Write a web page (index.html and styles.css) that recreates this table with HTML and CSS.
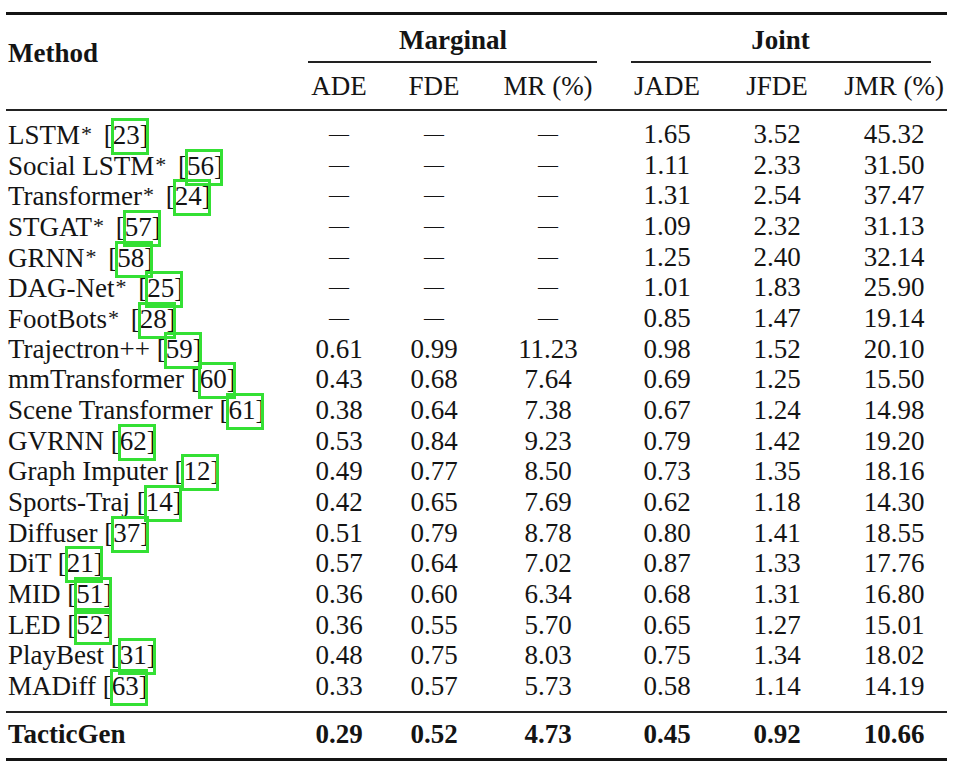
FILE: index.html
```html
<!DOCTYPE html>
<html lang="en">
<head>
<meta charset="utf-8">
<title>Results table</title>
<link rel="stylesheet" href="styles.css">
</head>
<body>
<div class="table">
  <div class="head">
    <div class="method">Method</div>
    <div class="grp marg">Marginal</div>
    <div class="grp joint">Joint</div>
    <div class="sub">ADE</div>
    <div class="sub">FDE</div>
    <div class="sub">MR (%)</div>
    <div class="sub">JADE</div>
    <div class="sub">JFDE</div>
    <div class="sub last">JMR (%)</div>
  </div>
  <div class="body">
    <div class="row"><div class="name">LSTM<span class="ast">*</span> [<span class="cite">23]</span></div><div class="c"><span class="dash">—</span></div><div class="c"><span class="dash">—</span></div><div class="c"><span class="dash">—</span></div><div class="c">1.65</div><div class="c">3.52</div><div class="c last">45.32</div></div>
    <div class="row"><div class="name">Social LSTM<span class="ast">*</span> [<span class="cite">56]</span></div><div class="c"><span class="dash">—</span></div><div class="c"><span class="dash">—</span></div><div class="c"><span class="dash">—</span></div><div class="c">1.11</div><div class="c">2.33</div><div class="c last">31.50</div></div>
    <div class="row"><div class="name">Transformer<span class="ast">*</span> [<span class="cite">24]</span></div><div class="c"><span class="dash">—</span></div><div class="c"><span class="dash">—</span></div><div class="c"><span class="dash">—</span></div><div class="c">1.31</div><div class="c">2.54</div><div class="c last">37.47</div></div>
    <div class="row"><div class="name">STGAT<span class="ast">*</span> [<span class="cite">57]</span></div><div class="c"><span class="dash">—</span></div><div class="c"><span class="dash">—</span></div><div class="c"><span class="dash">—</span></div><div class="c">1.09</div><div class="c">2.32</div><div class="c last">31.13</div></div>
    <div class="row"><div class="name">GRNN<span class="ast">*</span> [<span class="cite">58]</span></div><div class="c"><span class="dash">—</span></div><div class="c"><span class="dash">—</span></div><div class="c"><span class="dash">—</span></div><div class="c">1.25</div><div class="c">2.40</div><div class="c last">32.14</div></div>
    <div class="row"><div class="name">DAG-Net<span class="ast">*</span> [<span class="cite">25]</span></div><div class="c"><span class="dash">—</span></div><div class="c"><span class="dash">—</span></div><div class="c"><span class="dash">—</span></div><div class="c">1.01</div><div class="c">1.83</div><div class="c last">25.90</div></div>
    <div class="row"><div class="name">FootBots<span class="ast">*</span> [<span class="cite">28]</span></div><div class="c"><span class="dash">—</span></div><div class="c"><span class="dash">—</span></div><div class="c"><span class="dash">—</span></div><div class="c">0.85</div><div class="c">1.47</div><div class="c last">19.14</div></div>
    <div class="row"><div class="name">Trajectron++ [<span class="cite">59]</span></div><div class="c">0.61</div><div class="c">0.99</div><div class="c">11.23</div><div class="c">0.98</div><div class="c">1.52</div><div class="c last">20.10</div></div>
    <div class="row"><div class="name">mmTransformer [<span class="cite">60]</span></div><div class="c">0.43</div><div class="c">0.68</div><div class="c">7.64</div><div class="c">0.69</div><div class="c">1.25</div><div class="c last">15.50</div></div>
    <div class="row"><div class="name">Scene Transformer [<span class="cite">61]</span></div><div class="c">0.38</div><div class="c">0.64</div><div class="c">7.38</div><div class="c">0.67</div><div class="c">1.24</div><div class="c last">14.98</div></div>
    <div class="row"><div class="name">GVRNN [<span class="cite">62]</span></div><div class="c">0.53</div><div class="c">0.84</div><div class="c">9.23</div><div class="c">0.79</div><div class="c">1.42</div><div class="c last">19.20</div></div>
    <div class="row"><div class="name">Graph Imputer [<span class="cite">12]</span></div><div class="c">0.49</div><div class="c">0.77</div><div class="c">8.50</div><div class="c">0.73</div><div class="c">1.35</div><div class="c last">18.16</div></div>
    <div class="row"><div class="name">Sports-Traj [<span class="cite">14]</span></div><div class="c">0.42</div><div class="c">0.65</div><div class="c">7.69</div><div class="c">0.62</div><div class="c">1.18</div><div class="c last">14.30</div></div>
    <div class="row"><div class="name">Diffuser [<span class="cite">37]</span></div><div class="c">0.51</div><div class="c">0.79</div><div class="c">8.78</div><div class="c">0.80</div><div class="c">1.41</div><div class="c last">18.55</div></div>
    <div class="row"><div class="name">DiT [<span class="cite">21]</span></div><div class="c">0.57</div><div class="c">0.64</div><div class="c">7.02</div><div class="c">0.87</div><div class="c">1.33</div><div class="c last">17.76</div></div>
    <div class="row"><div class="name">MID [<span class="cite">51]</span></div><div class="c">0.36</div><div class="c">0.60</div><div class="c">6.34</div><div class="c">0.68</div><div class="c">1.31</div><div class="c last">16.80</div></div>
    <div class="row"><div class="name">LED [<span class="cite">52]</span></div><div class="c">0.36</div><div class="c">0.55</div><div class="c">5.70</div><div class="c">0.65</div><div class="c">1.27</div><div class="c last">15.01</div></div>
    <div class="row"><div class="name">PlayBest [<span class="cite">31]</span></div><div class="c">0.48</div><div class="c">0.75</div><div class="c">8.03</div><div class="c">0.75</div><div class="c">1.34</div><div class="c last">18.02</div></div>
    <div class="row"><div class="name">MADiff [<span class="cite">63]</span></div><div class="c">0.33</div><div class="c">0.57</div><div class="c">5.73</div><div class="c">0.58</div><div class="c">1.14</div><div class="c last">14.19</div></div>
  </div>
  <div class="final">
    <div class="row bold"><div class="name">TacticGen</div><div class="c">0.29</div><div class="c">0.52</div><div class="c">4.73</div><div class="c">0.45</div><div class="c">0.92</div><div class="c last">10.66</div></div>
  </div>
</div>
</body>
</html>
```

FILE: styles.css
```css
html, body {
  margin: 0;
  padding: 0;
  background: #ffffff;
}

body {
  font-family: "Liberation Serif", "Times New Roman", serif;
  font-size: 27px;
  color: #141414;
}

.table {
  margin: 12px 0 0 6px;
  width: 941px;
  border-top: 3px solid #141414;
  border-bottom: 3px solid #141414;
}

.head,
.row {
  display: grid;
  grid-template-columns: 286px 94px 96px 132px 106px 114px 113px;
}

.head {
  border-bottom: 2px solid #222;
}

.method {
  grid-column: 1;
  grid-row: 1 / 3;
  font-weight: bold;
  padding: 23px 0 0 2px;
  line-height: 30.67px;
}

.grp {
  font-weight: bold;
  text-align: center;
  padding-top: 9.6px;
  line-height: 30.67px;
}

.grp::after {
  content: "";
  display: block;
  height: 0;
  border-top: 2px solid #222;
  margin-top: 5.7px;
}

.marg {
  grid-column: 2 / 5;
}

.marg::after {
  margin-left: 16px;
  margin-right: 17px;
}

.joint {
  grid-column: 5 / 8;
}

.joint::after {
  margin-left: 17px;
  margin-right: 16px;
}

.sub {
  grid-row: 2;
  text-align: center;
  padding: 7.67px 0;
  line-height: 30.67px;
  white-space: nowrap;
}

.body {
  padding: 8.17px 0 9.5px;
  border-bottom: 2px solid #222;
}

.final {
  padding: 5.67px 0 8.5px;
}

.row {
  height: 30.67px;
  line-height: 30.67px;
}

.name {
  padding-left: 2px;
  white-space: nowrap;
}

.c {
  text-align: center;
  white-space: nowrap;
}

.last {
  padding-left: 7px;
}

.bold {
  font-weight: bold;
}

.ast {
  font-size: 22px;
  vertical-align: 3px;
  margin-left: 1px;
  margin-right: 5px;
}

.dash {
  font-size: 20px;
  line-height: 20px;
  vertical-align: 2px;
}

.cite {
  position: relative;
}

.cite::after {
  content: "";
  position: absolute;
  left: -2px;
  right: 0;
  top: -2px;
  bottom: -5px;
  border: 3px solid #34e034;
}
```
